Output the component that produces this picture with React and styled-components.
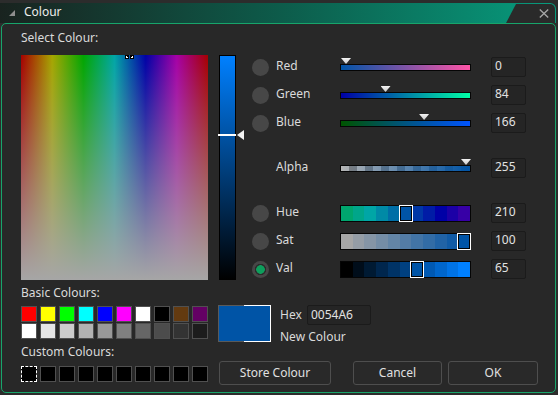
import React from 'react';
import styled, { createGlobalStyle } from 'styled-components';

const GlobalStyle = createGlobalStyle`
  html, body { margin: 0; padding: 0; background: #2c2c2c; }
  body { font-family: "Noto Sans", "Open Sans", sans-serif; font-size: 12px; color: #dadada; }
  * { box-sizing: border-box; }
`;

const hsv = (h, s, v) => {
  const f = (n) => {
    const k = (n + h / 60) % 6;
    return v - v * s * Math.max(0, Math.min(k, 4 - k, 1));
  };
  const to = (x) => Math.round(x * 255).toString(16).padStart(2, '0');
  return `#${to(f(5))}${to(f(3))}${to(f(1))}`;
};

const CURRENT = '#0054a6';

const Window = styled.div`
  width: 558px;
  height: 395px;
  padding-top: 3px;
  display: flex;
  flex-direction: column;
  overflow: hidden;
`;

const TitleBar = styled.div`
  height: 20px;
  margin-right: 2px;
  display: flex;
  align-items: flex-start;
  background: linear-gradient(90deg, #19231f 0%, #0d5b4a 50%, #079b7d 100%);
  border-top-right-radius: 6px;
`;

const TitleIcon = styled.svg`
  margin: 7px 0 0 9px;
  flex: none;
`;

const TitleText = styled.div`
  margin-left: 9px;
  line-height: 18px;
  color: #ececec;
`;

const CloseTab = styled.div`
  margin: 1px 1px 0 auto;
  width: 49px;
  height: 19px;
  background: #2a2a2a;
  border-top-right-radius: 5px;
  clip-path: polygon(10px 0, 100% 0, 100% 100%, 0 100%);
  display: flex;
  align-items: center;
  justify-content: flex-end;
  padding: 0 6px 1px 0;
`;

const Body = styled.div`
  margin-left: 1px;
  width: 555px;
  height: 370px;
  border: 1px solid #17a56b;
  border-radius: 5px;
  background: #282828;
  padding: 6px 0 0 19px;
`;

const Heading = styled.div`
  line-height: 16px;
  color: #dadada;
`;

const MainRow = styled.div`
  margin-top: 9px;
  display: flex;
  align-items: flex-start;
`;

const ColorField = styled.div`
  position: relative;
  width: 187px;
  height: 225px;
  flex: none;
  background:
    linear-gradient(to bottom, rgba(166, 166, 166, 0), #a6a6a6),
    linear-gradient(to right, #a60000 0%, #a6a600 16.667%, #00a600 33.333%, #00a6a6 50%, #0000a6 66.667%, #a600a6 83.333%, #a60000 100%);
`;

const FieldCursor = styled.svg`
  position: absolute;
  left: 104px;
  top: 0;
`;

const ValueColumn = styled.div`
  position: relative;
  margin-left: 11px;
  width: 17px;
  height: 225px;
  flex: none;
`;

const ValueStrip = styled.div`
  width: 100%;
  height: 100%;
  border: 1px solid #000;
  background: linear-gradient(to bottom, #0080ff, #000000);
`;

const ValueLine = styled.div`
  position: absolute;
  left: -1px;
  width: 18px;
  height: 2px;
  background: #fff;
`;

const ValueArrow = styled.div`
  position: absolute;
  left: 18px;
  width: 7px;
  height: 10px;
  background: #f2f2f2;
  clip-path: polygon(0 50%, 100% 0, 100% 100%);
`;

const RightPanel = styled.div`
  margin: 2px 0 0 16px;
  display: flex;
  flex-direction: column;
`;

const Row = styled.div`
  display: flex;
  align-items: center;
  height: 20px;
  margin-top: ${(p) => p.$gap || 0}px;
`;

const RadioSlot = styled.div`
  width: 24px;
  flex: none;
  display: flex;
  align-items: center;
`;

const Radio = styled.div`
  width: 17px;
  height: 17px;
  border-radius: 50%;
  background: ${(p) =>
    p.$checked
      ? 'radial-gradient(circle, #0e9e5c 0 4px, #2b2b2b 4.6px 5.4px, #474747 6px)'
      : '#474747'};
`;

const Label = styled.div`
  width: 64px;
  flex: none;
  line-height: 16px;
  padding-bottom: 2px;
  color: #dadada;
`;

const SliderSlot = styled.div`
  position: relative;
  width: 131px;
  height: 20px;
  flex: none;
`;

const ThinBar = styled.div`
  position: absolute;
  left: 0;
  top: 7px;
  width: 100%;
  height: 7px;
  border: 1px solid #050505;
  background: ${(p) => p.$bg};
`;

const Pointer = styled.div`
  position: absolute;
  top: 1px;
  width: 10px;
  height: 6px;
  background: linear-gradient(to bottom, #f4f4f4, #c9c9c9);
  clip-path: polygon(0 0, 100% 0, 50% 100%);
`;

const BlockBar = styled.div`
  position: absolute;
  left: 0;
  top: 2px;
  width: 100%;
  height: 17px;
  border: 1px solid #050505;
  display: flex;
`;

const Block = styled.div`
  flex: 1;
  background: ${(p) => p.$c};
`;

const BlockMarker = styled.div`
  position: absolute;
  top: 2px;
  width: 14px;
  height: 17px;
  border: 1px solid #ffffff;
  box-shadow: inset 0 0 0 1px #000;
  background: ${CURRENT};
`;

const ValueBox = styled.div`
  margin-left: 20px;
  width: 35px;
  height: 20px;
  flex: none;
  border: 1px solid #1b1b1b;
  border-radius: 2px;
  background: #252525;
  padding-left: 3px;
  line-height: 16px;
  color: #e2e2e2;
`;

const BottomSection = styled.div`
  margin-top: 5px;
  display: flex;
  align-items: flex-start;
`;

const LeftColumn = styled.div`
  width: 187px;
  flex: none;
  display: flex;
  flex-direction: column;
`;

const SectionLabel = styled.div`
  line-height: 16px;
  margin-top: ${(p) => p.$gap || 0}px;
  color: #dadada;
`;

const SwatchGrid = styled.div`
  margin-top: ${(p) => p.$gap || 0}px;
  display: grid;
  grid-template-columns: repeat(10, 16px);
  column-gap: 3px;
  row-gap: 1px;
`;

const Swatch = styled.div`
  width: 16px;
  height: 16px;
  background: ${(p) => p.$c};
  border: 1px ${(p) => (p.$selected ? 'dashed #ffffff' : 'solid #505050')};
`;

const RightColumn = styled.div`
  margin-left: 10px;
  padding-top: 20px;
  display: flex;
  flex-direction: column;
`;

const PreviewRow = styled.div`
  display: flex;
  align-items: flex-start;
`;

const Preview = styled.div`
  display: flex;
  height: 37px;
`;

const NewSwatch = styled.div`
  width: 26px;
  background: ${CURRENT};
  border: 1px solid #5a5a5a;
  border-right: none;
`;

const OldSwatch = styled.div`
  width: 27px;
  background: ${CURRENT};
  border: 1px solid #ffffff;
  border-left: none;
`;

const HexArea = styled.div`
  margin-left: 9px;
  display: flex;
  flex-direction: column;
`;

const HexLine = styled.div`
  display: flex;
  align-items: center;
  height: 20px;
`;

const HexLabel = styled.div`
  width: 27px;
  line-height: 16px;
  color: #dadada;
`;

const HexInput = styled.div`
  width: 64px;
  height: 20px;
  border: 1px solid #1b1b1b;
  border-radius: 2px;
  background: #252525;
  padding-left: 3px;
  line-height: 17px;
  color: #e2e2e2;
`;

const NewLabel = styled.div`
  margin-top: 4px;
  line-height: 16px;
  color: #dadada;
`;

const ButtonRow = styled.div`
  margin-top: 16px;
  display: flex;
`;

const Button = styled.div`
  width: ${(p) => p.$w}px;
  margin-left: ${(p) => p.$ml}px;
  height: 24px;
  border: 1px solid #4e4e4e;
  border-radius: 3px;
  background: #292929;
  display: flex;
  align-items: center;
  justify-content: center;
  line-height: 16px;
  color: #e0e0e0;
`;

const BASIC = [
  '#ff0000', '#ffff00', '#00ff00', '#00ffff', '#0000ff', '#ff00ff', '#ffffff', '#000000', '#633a10', '#640064',
  '#ffffff', '#e5e5e5', '#cccccc', '#b2b2b2', '#999999', '#808080', '#666666', '#4c4c4c', '#333333', '#1c1c1c',
];

const rgbRows = [
  { name: 'Red', value: 0, bg: 'linear-gradient(to right, #0054a6, #ff54a6)', gap: 0 },
  { name: 'Green', value: 84, bg: 'linear-gradient(to right, #0000a6, #00ffa6)', gap: 8 },
  { name: 'Blue', value: 166, bg: 'linear-gradient(to right, #005400, #0054ff)', gap: 8 },
];

const alphaBg =
  'linear-gradient(to right, rgba(0,84,166,0), rgba(0,84,166,1)), repeating-linear-gradient(to right, #b4b4b4 0 8px, #808080 8px 16px)';

const range11 = Array.from({ length: 11 }, (_, i) => i);
const hsvRows = [
  { name: 'Hue', value: 210, colors: range11.map((i) => hsv(160 + i * 10, 1, 0.65)), idx: 5, gap: 25 },
  { name: 'Sat', value: 100, colors: range11.map((i) => hsv(210, i / 10, 0.65)), idx: 10, gap: 8 },
  { name: 'Val', value: 65, colors: range11.map((i) => hsv(210, 1, i / 10)), idx: 6, gap: 8, checked: true },
];

const pointerLeft = (v) => 6 + (v / 255) * 120 - 5;
const blockLeft = (i) => 1 + (i + 0.5) * (129 / 11) - 7;

export default function App() {
  return (
    <>
      <GlobalStyle />
      <Window>
        <TitleBar>
          <TitleIcon width="6" height="6" viewBox="0 0 6 6">
            <polygon points="6,0 6,6 0,6" fill="#8e8e8e" />
          </TitleIcon>
          <TitleText>Colour</TitleText>
          <CloseTab>
            <svg width="10" height="9" viewBox="0 0 10 9">
              <path d="M0.8 0.5 L9.2 8.5 M9.2 0.5 L0.8 8.5" stroke="#a4a4a4" strokeWidth="1.4" />
            </svg>
          </CloseTab>
        </TitleBar>
        <Body>
          <Heading>Select Colour:</Heading>
          <MainRow>
            <ColorField>
              <FieldCursor width="9" height="5" viewBox="0 0 9 5">
                <rect x="0" y="0" width="4" height="4" fill="#000" />
                <rect x="5" y="0" width="4" height="4" fill="#000" />
                <rect x="1" y="1" width="1" height="1" fill="#fff" />
                <rect x="7" y="1" width="1" height="1" fill="#fff" />
                <rect x="1" y="2" width="2" height="1" fill="#fff" />
                <rect x="6" y="2" width="2" height="1" fill="#fff" />
              </FieldCursor>
            </ColorField>
            <ValueColumn>
              <ValueStrip />
              <ValueLine style={{ top: 79 }} />
              <ValueArrow style={{ top: 75 }} />
            </ValueColumn>
            <RightPanel>
              {rgbRows.map((r) => (
                <Row key={r.name} $gap={r.gap}>
                  <RadioSlot>
                    <Radio />
                  </RadioSlot>
                  <Label>{r.name}</Label>
                  <SliderSlot>
                    <ThinBar $bg={r.bg} />
                    <Pointer style={{ left: pointerLeft(r.value) }} />
                  </SliderSlot>
                  <ValueBox>{r.value}</ValueBox>
                </Row>
              ))}
              <Row $gap={25}>
                <RadioSlot />
                <Label>Alpha</Label>
                <SliderSlot>
                  <ThinBar $bg={alphaBg} />
                  <Pointer style={{ left: pointerLeft(255) }} />
                </SliderSlot>
                <ValueBox>255</ValueBox>
              </Row>
              {hsvRows.map((r) => (
                <Row key={r.name} $gap={r.gap}>
                  <RadioSlot>
                    <Radio $checked={r.checked} />
                  </RadioSlot>
                  <Label>{r.name}</Label>
                  <SliderSlot>
                    <BlockBar>
                      {r.colors.map((c, i) => (
                        <Block key={i} $c={c} />
                      ))}
                    </BlockBar>
                    <BlockMarker style={{ left: blockLeft(r.idx) }} />
                  </SliderSlot>
                  <ValueBox>{r.value}</ValueBox>
                </Row>
              ))}
            </RightPanel>
          </MainRow>
          <BottomSection>
            <LeftColumn>
              <SectionLabel>Basic Colours:</SectionLabel>
              <SwatchGrid $gap={5}>
                {BASIC.map((c, i) => (
                  <Swatch key={i} $c={c} />
                ))}
              </SwatchGrid>
              <SectionLabel $gap={5}>Custom Colours:</SectionLabel>
              <SwatchGrid $gap={6}>
                {Array.from({ length: 10 }, (_, i) => (
                  <Swatch key={i} $c="#000000" $selected={i === 0} />
                ))}
              </SwatchGrid>
            </LeftColumn>
            <RightColumn>
              <PreviewRow>
                <Preview>
                  <NewSwatch />
                  <OldSwatch />
                </Preview>
                <HexArea>
                  <HexLine>
                    <HexLabel>Hex</HexLabel>
                    <HexInput>0054A6</HexInput>
                  </HexLine>
                  <NewLabel>New Colour</NewLabel>
                </HexArea>
              </PreviewRow>
              <ButtonRow>
                <Button $w={112} $ml={1}>Store Colour</Button>
                <Button $w={89} $ml={22}>Cancel</Button>
                <Button $w={90} $ml={6}>OK</Button>
              </ButtonRow>
            </RightColumn>
          </BottomSection>
        </Body>
      </Window>
    </>
  );
}
